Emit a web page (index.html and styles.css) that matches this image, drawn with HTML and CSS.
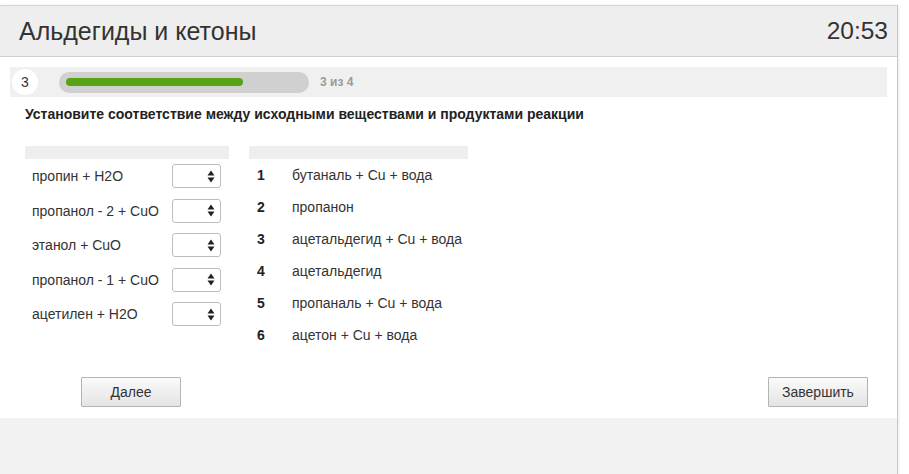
FILE: index.html
```html
<!DOCTYPE html>
<html lang="ru">
<head>
<meta charset="utf-8">
<title>Альдегиды и кетоны</title>
<link rel="stylesheet" href="styles.css">
</head>
<body>
<div class="panel">
  <header class="head">
    <h1 class="title">Альдегиды и кетоны</h1>
    <div class="timer">20:53</div>
  </header>
  <main class="content">
    <div class="progress">
      <div class="num">3</div>
      <div class="track"><div class="fill"></div></div>
      <div class="count">3 из 4</div>
    </div>
    <p class="question">Установите соответствие между исходными веществами и продуктами реакции</p>
    <div class="tables">
      <div class="left">
        <div class="colhead"></div>
        <div class="lrow"><span class="ltext">пропин + H2O</span><span class="sel"><svg width="8" height="13" viewBox="0 0 8 13"><path d="M4 0.5 L7.5 5.5 H0.5Z M4 12.5 L7.5 7.5 H0.5Z" fill="#222"/></svg></span></div>
        <div class="lrow"><span class="ltext">пропанол - 2 + CuO</span><span class="sel"><svg width="8" height="13" viewBox="0 0 8 13"><path d="M4 0.5 L7.5 5.5 H0.5Z M4 12.5 L7.5 7.5 H0.5Z" fill="#222"/></svg></span></div>
        <div class="lrow"><span class="ltext">этанол + CuO</span><span class="sel"><svg width="8" height="13" viewBox="0 0 8 13"><path d="M4 0.5 L7.5 5.5 H0.5Z M4 12.5 L7.5 7.5 H0.5Z" fill="#222"/></svg></span></div>
        <div class="lrow"><span class="ltext">пропанол - 1 + CuO</span><span class="sel"><svg width="8" height="13" viewBox="0 0 8 13"><path d="M4 0.5 L7.5 5.5 H0.5Z M4 12.5 L7.5 7.5 H0.5Z" fill="#222"/></svg></span></div>
        <div class="lrow"><span class="ltext">ацетилен + H2O</span><span class="sel"><svg width="8" height="13" viewBox="0 0 8 13"><path d="M4 0.5 L7.5 5.5 H0.5Z M4 12.5 L7.5 7.5 H0.5Z" fill="#222"/></svg></span></div>
      </div>
      <div class="right">
        <div class="colhead"></div>
        <div class="rrow"><span class="rnum">1</span><span>бутаналь + Cu + вода</span></div>
        <div class="rrow"><span class="rnum">2</span><span>пропанон</span></div>
        <div class="rrow"><span class="rnum">3</span><span>ацетальдегид + Cu + вода</span></div>
        <div class="rrow"><span class="rnum">4</span><span>ацетальдегид</span></div>
        <div class="rrow"><span class="rnum">5</span><span>пропаналь + Cu + вода</span></div>
        <div class="rrow"><span class="rnum">6</span><span>ацетон + Cu + вода</span></div>
      </div>
    </div>
    <div class="buttons">
      <button class="btn btn-next">Далее</button>
      <button class="btn btn-finish">Завершить</button>
    </div>
  </main>
  <footer class="foot"></footer>
</div>
</body>
</html>
```
FILE: styles.css
```css
html, body {
  margin: 0;
  height: 100%;
  overflow: hidden;
  background: #ffffff;
  font-family: "Liberation Sans", Arial, sans-serif;
  color: #333;
}
.panel {
  box-sizing: border-box;
  width: 898px;
  height: 469px;
  margin-top: 5px;
  border-top: 1px solid #d4d4d4;
  border-right: 1px solid #c8c8c8;
  box-shadow: 1px 0 2px rgba(0,0,0,0.08);
  display: flex;
  flex-direction: column;
}
.head {
  height: 50px;
  background: #eeeeee;
  border-bottom: 1px solid #cfcfcf;
  display: flex;
  align-items: center;
  justify-content: space-between;
  padding: 0 9px 0 19px;
  flex-shrink: 0;
}
.title {
  margin: 0;
  font-size: 25px;
  font-weight: normal;
  color: #333;
}
.timer {
  font-size: 24.5px;
  color: #333;
}
.content {
  background: #fff;
  padding: 10px 10px 11px 10px;
  flex-shrink: 0;
}
.progress {
  height: 30px;
  background: #f0f0f0;
  display: flex;
  align-items: center;
}
.num {
  width: 26px;
  height: 26px;
  margin-left: 2px;
  border-radius: 50%;
  background: #fff;
  font-size: 14px;
  line-height: 26px;
  text-align: center;
  color: #333;
}
.track {
  box-sizing: border-box;
  width: 250px;
  height: 21px;
  margin-left: 21px;
  border-radius: 11px;
  background: #d0d0d0;
  padding: 6px 7px;
}
.fill {
  width: 177px;
  height: 8px;
  border-radius: 4px;
  background: #57a316;
}
.count {
  margin-left: 11px;
  font-size: 12px;
  font-weight: bold;
  color: #9a9a9a;
}
.question {
  margin: 9px 0 0 15px;
  font-size: 14px;
  line-height: 17px;
  font-weight: bold;
  color: #222;
}
.tables {
  display: flex;
  margin: 23px 0 0 15px;
  gap: 20px;
  align-items: flex-start;
}
.colhead {
  height: 13px;
  background: #eeeeee;
}
.left {
  width: 204px;
}
.lrow {
  height: 34.5px;
  display: flex;
  align-items: center;
  padding-left: 7px;
  font-size: 14px;
  color: #333;
}
.ltext {
  width: 140px;
}
.sel {
  box-sizing: border-box;
  width: 49px;
  height: 24px;
  border: 1px solid #bdbdbd;
  border-radius: 3px;
  background: #fff;
  display: flex;
  align-items: center;
  justify-content: flex-end;
  padding-right: 5px;
}
.right {
  width: 219px;
}
.rrow {
  height: 32px;
  display: flex;
  align-items: center;
  padding-left: 8px;
  font-size: 14px;
  color: #333;
}
.rnum {
  width: 35px;
  font-weight: bold;
  color: #222;
}
.buttons {
  display: flex;
  justify-content: space-between;
  margin-top: 26px;
  padding: 0 19px 0 71px;
}
.btn {
  width: 100px;
  height: 30px;
  font-family: "Liberation Sans", Arial, sans-serif;
  font-size: 14px;
  color: #333;
  border: 1px solid #b4b4b4;
  border-radius: 1px;
  background: linear-gradient(#fafafa, #e4e4e4);
  padding: 0;
}
.foot {
  flex: 1;
  background: #f2f2f2;
}
```
